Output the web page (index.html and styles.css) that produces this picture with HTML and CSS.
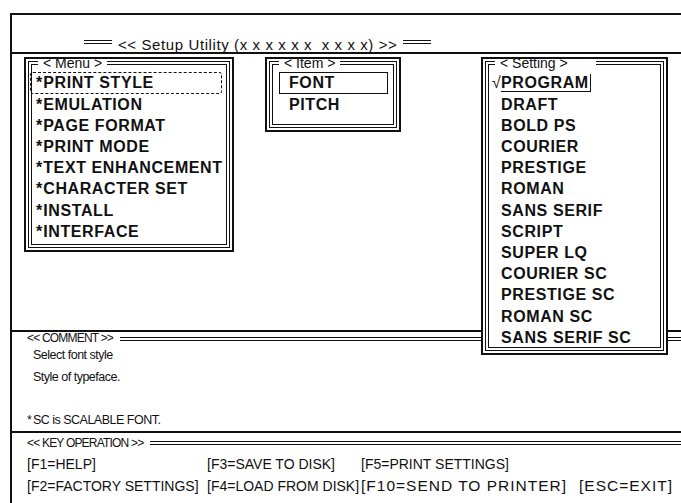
FILE: index.html
```html
<!DOCTYPE html>
<html>
<head>
    <title>Setup Utility</title>
    <link rel="stylesheet" href="styles.css">
</head>
<body>
    <div class="screen">
        <div class="title-bar">
            <span class="title-rule"></span>
            <span class="title">&lt;&lt; Setup Utility (x x x x x x &nbsp;x x x x) &gt;&gt;</span>
            <span class="title-rule"></span>
        </div>

        <div class="work-area">
            <div class="box menu-box">
                <fieldset class="box-inner">
                    <legend>&lt; Menu &gt;</legend>
                    <ul class="list">
                        <li class="selected"><span class="star">*</span>PRINT STYLE</li>
                        <li><span class="star">*</span>EMULATION</li>
                        <li><span class="star">*</span>PAGE FORMAT</li>
                        <li><span class="star">*</span>PRINT MODE</li>
                        <li><span class="star">*</span>TEXT ENHANCEMENT</li>
                        <li><span class="star">*</span>CHARACTER SET</li>
                        <li><span class="star">*</span>INSTALL</li>
                        <li><span class="star">*</span>INTERFACE</li>
                    </ul>
                </fieldset>
            </div>

            <div class="box item-box">
                <fieldset class="box-inner">
                    <legend>&lt; Item &gt;</legend>
                    <ul class="list">
                        <li class="current">FONT</li>
                        <li>PITCH</li>
                    </ul>
                </fieldset>
            </div>

            <div class="box setting-box">
                <fieldset class="box-inner">
                    <legend>&lt; Setting &gt;</legend>
                    <ul class="list">
                        <li class="first"><span class="check">&radic;</span><span class="checked">PROGRAM</span></li>
                        <li>DRAFT</li>
                        <li>BOLD PS</li>
                        <li>COURIER</li>
                        <li>PRESTIGE</li>
                        <li>ROMAN</li>
                        <li>SANS SERIF</li>
                        <li>SCRIPT</li>
                        <li>SUPER LQ</li>
                        <li>COURIER SC</li>
                        <li>PRESTIGE SC</li>
                        <li>ROMAN SC</li>
                        <li>SANS SERIF SC</li>
                    </ul>
                </fieldset>
            </div>
        </div>

        <div class="comment">
            <div class="section-head">
                <span>&lt;&lt; COMMENT &gt;&gt;</span>
                <span class="head-rule"></span>
            </div>
            <p class="comment-line indent">Select font style</p>
            <p class="comment-line indent">Style of typeface.</p>
            <p class="comment-line"></p>
            <p class="comment-line"><span class="star">*</span>SC is SCALABLE FONT.</p>
        </div>

        <div class="keys">
            <div class="section-head key-head">
                <span>&lt;&lt; KEY OPERATION &gt;&gt;</span>
                <span class="head-rule"></span>
            </div>
            <div class="key-grid">
                <span>[F1=HELP]</span>
                <span>[F3=SAVE TO DISK]</span>
                <span>[F5=PRINT SETTINGS]</span>
                <span></span>
                <span>[F2=FACTORY SETTINGS]</span>
                <span>[F4=LOAD FROM DISK]</span>
                <span class="wide">[F10=SEND TO PRINTER]</span>
                <span class="wide">[ESC=EXIT]</span>
            </div>
        </div>
    </div>
</body>
</html>
```

FILE: styles.css
```css
/* Printer setup utility screen, as printed in the manual */
html, body {
    margin: 0;
    overflow: hidden;
    background-color: #fff;
}
body {
    font-family: "Liberation Sans", Arial, sans-serif;
    color: #111;
}
.screen {
    margin: 13px 0 0 10px;
    width: 700px;
    height: 490px;
    border-top: 2px solid #111;
    border-left: 2px solid #111;
}

/* title bar */
.title-bar {
    height: 37px;
    display: flex;
    align-items: flex-end;
    gap: 6px;
    padding-left: 72px;
    border-bottom: 2px solid #111;
}
.title {
    font-size: 15px;
    letter-spacing: 0.6px;
    line-height: 16px;
    margin-bottom: -1px;
}
.title-rule {
    width: 28px;
    height: 2px;
    border-top: 1px solid #111;
    border-bottom: 1px solid #111;
    margin-bottom: 8px;
}

/* boxes */
.work-area {
    height: 273px;
    display: flex;
    align-items: flex-start;
    padding: 3px 0 0 12px;
}
.box {
    box-sizing: border-box;
    border: 2px solid #111;
    padding: 2px;
    background-color: #fff;
}
.box-inner {
    margin: 0;
    padding: 0 0 2px 0;
    border: 4px double #111;
}
.box-inner legend {
    margin-left: 6px;
    padding: 0 5px;
    height: 4px;
    font-size: 14px;
    line-height: 5px;
}
.menu-box {
    width: 210px;
}
.item-box {
    width: 136px;
    margin-left: 31px;
}
.item-box .box-inner {
    padding-bottom: 9px;
}
.setting-box {
    width: 187px;
    height: 298px;
    margin-left: 80px;
    position: relative;
    z-index: 1;
}
.setting-box .box-inner {
    height: 100%;
    box-sizing: border-box;
}
.setting-box legend {
    padding-right: 28px;
}
.list {
    list-style: none;
    margin: 7.4px 0 0 0;
    padding: 0;
    font-size: 16px;
    font-weight: bold;
    letter-spacing: 0.6px;
    line-height: 21.2px;
    white-space: nowrap;
}
.menu-box li {
    padding-left: 4px;
}
.item-box li {
    padding-left: 16px;
}
.setting-box li {
    padding-left: 12px;
}
.star {
    letter-spacing: 0;
    margin-right: 1px;
}
.list .selected {
    border: 1px dashed #111;
    border-radius: 3px;
    margin: 0 4px 0 -2px;
    padding-left: 5px;
    line-height: 19.2px;
}
.list .current {
    border: 1px solid #111;
    margin: 0 5px 0 6px;
    padding-left: 9px;
    line-height: 19.2px;
}
.setting-box .first {
    padding-left: 3px;
}
.check {
    display: inline-block;
    width: 9px;
    font-weight: normal;
    letter-spacing: 0;
}
.checked {
    border-bottom: 1px solid #111;
    border-right: 1px solid #111;
    padding-right: 1px;
}

/* comment and key operation */
.comment, .keys {
    border-top: 2px solid #111;
    padding-left: 15px;
}
.section-head {
    display: flex;
    align-items: center;
    gap: 7px;
    font-size: 12px;
    letter-spacing: -0.8px;
    line-height: 13px;
}
.head-rule {
    flex: 1;
    height: 2px;
    border-top: 1px solid #111;
    border-bottom: 1px solid #111;
}
.comment-line {
    margin: 0;
    height: 21.5px;
    font-size: 12.5px;
    letter-spacing: -0.5px;
    line-height: 21.5px;
}
.indent {
    padding-left: 6px;
}
.key-head {
    line-height: 20px;
}
.key-grid {
    display: grid;
    grid-template-columns: 180px 154px 218px auto;
    font-size: 14px;
    line-height: 22px;
    white-space: nowrap;
}
.key-grid .wide {
    font-size: 15.5px;
    letter-spacing: 1px;
}
```
